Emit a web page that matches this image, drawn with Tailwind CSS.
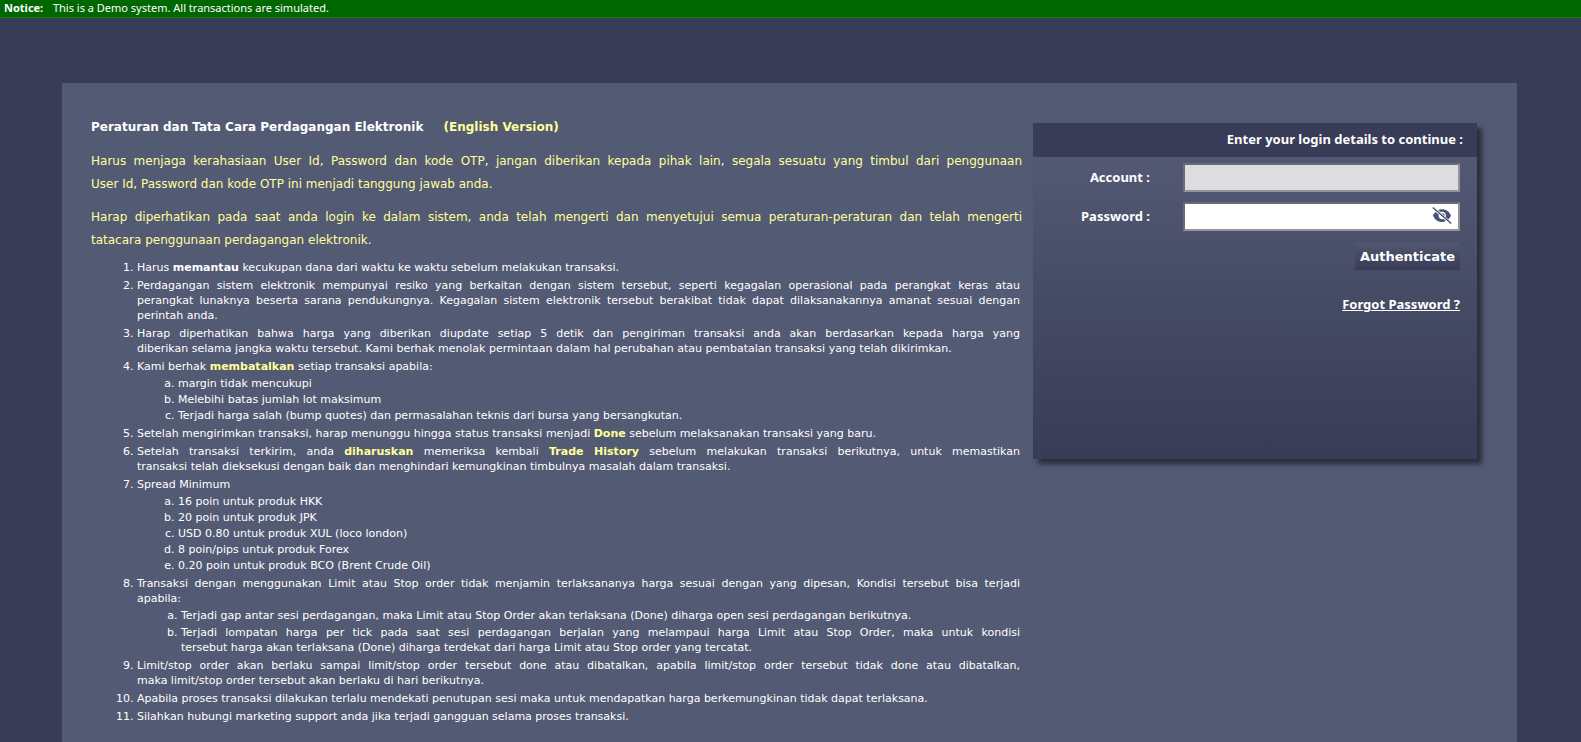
<!DOCTYPE html>
<html lang="id">
<head>
    <meta charset="UTF-8">
    <meta name="viewport" content="width=device-width, initial-scale=1.0">
    <title>Login</title>
    <script src="https://cdn.jsdelivr.net/npm/@tailwindcss/browser@4"></script>
</head>
<body class="bg-[#383c56] min-h-screen flex flex-col font-['DejaVu_Sans',sans-serif] text-white">
    <!-- Demo notice -->
    <div class="bg-[#006600] border-b border-[#148014] px-1 pb-px font-['Noto_Sans',sans-serif] text-[11px] leading-4">
        <b class="mr-1">Notice:</b>&nbsp; This is a Demo system. All transactions are simulated.
    </div>

    <main class="grow mt-[65px] ml-[62px] mr-16 bg-[#535a74] flex items-start pl-[29px] pr-10 pb-5">
        <!-- Rules -->
        <section class="flex-1 pt-[33px] text-justify">
            <h1 class="text-xs leading-[23px] font-bold">
                Peraturan dan Tata Cara Perdagangan Elektronik
                <a href="#" class="ml-4 text-[#ffff99]">(English Version)</a>
            </h1>
            <p class="mt-[11px] text-xs leading-[23px] text-[#ffff99]">
                Harus menjaga kerahasiaan User Id, Password dan kode OTP, jangan diberikan kepada pihak lain, segala sesuatu yang timbul dari penggunaan User&nbsp;Id,&nbsp;Password dan kode OTP ini menjadi tanggung jawab anda.
            </p>
            <p class="mt-[10px] text-xs leading-[23px] text-[#ffff99]">
                Harap diperhatikan pada saat anda login ke dalam sistem, anda telah mengerti dan menyetujui semua peraturan-peraturan dan telah mengerti tatacara&nbsp;penggunaan perdagangan elektronik.
            </p>

            <ol class="mt-2 pl-[46px] pr-[2px] list-decimal text-[11px] leading-[15px] space-y-[3px]">
                <li>Harus <b>memantau</b> kecukupan dana dari waktu ke waktu sebelum melakukan transaksi.</li>
                <li>Perdagangan sistem elektronik mempunyai resiko yang berkaitan dengan sistem tersebut, seperti kegagalan operasional pada perangkat keras atau perangkat&nbsp;lunaknya beserta sarana pendukungnya. Kegagalan sistem elektronik tersebut berakibat tidak dapat dilaksanakannya amanat sesuai dengan perintah&nbsp;anda.</li>
                <li>Harap diperhatikan bahwa harga yang diberikan diupdate setiap 5 detik dan pengiriman transaksi anda akan berdasarkan kepada harga yang diberikan&nbsp;selama&nbsp;jangka waktu tersebut. Kami berhak menolak permintaan dalam hal perubahan atau pembatalan transaksi yang telah dikirimkan.</li>
                <li>Kami berhak <b class="text-[#ffff99]">membatalkan</b> setiap transaksi apabila:
                    <ol class="mt-[2px] mb-[3px] pl-[41px] list-[lower-alpha] space-y-px">
                        <li>margin tidak mencukupi</li>
                        <li>Melebihi batas jumlah lot maksimum</li>
                        <li>Terjadi harga salah (bump quotes) dan permasalahan teknis dari bursa yang bersangkutan.</li>
                    </ol>
                </li>
                <li>Setelah mengirimkan transaksi, harap menunggu hingga status transaksi menjadi <b class="text-[#ffff99]">Done</b> sebelum melaksanakan transaksi yang baru.</li>
                <li>Setelah transaksi terkirim, anda <b class="text-[#ffff99]">diharuskan</b> memeriksa kembali <b class="text-[#ffff99]">Trade History</b> sebelum melakukan transaksi berikutnya, untuk memastikan transaksi&nbsp;telah&nbsp;dieksekusi dengan baik dan menghindari kemungkinan timbulnya masalah dalam transaksi.</li>
                <li>Spread Minimum
                    <ol class="mt-[2px] mb-[3px] pl-[41px] list-[lower-alpha] space-y-px">
                        <li>16 poin untuk produk HKK</li>
                        <li>20 poin untuk produk JPK</li>
                        <li>USD 0.80 untuk produk XUL (loco london)</li>
                        <li>8 poin/pips untuk produk Forex</li>
                        <li>0.20 poin untuk produk BCO (Brent Crude Oil)</li>
                    </ol>
                </li>
                <li><span class="block [text-align-last:justify]">Transaksi dengan menggunakan Limit atau Stop order tidak menjamin terlaksananya harga sesuai dengan yang dipesan, Kondisi tersebut bisa terjadi</span> apabila:
                    <ol class="mt-[2px] mb-[2px] pl-[44px] list-[lower-alpha] space-y-[2px]">
                        <li>Terjadi gap antar sesi perdagangan, maka Limit atau Stop Order akan terlaksana (Done) diharga open sesi perdagangan berikutnya.</li>
                        <li>Terjadi lompatan harga per tick pada saat sesi perdagangan berjalan yang melampaui harga Limit atau Stop Order, maka untuk kondisi tersebut&nbsp;harga&nbsp;akan terlaksana (Done) diharga terdekat dari harga Limit atau Stop order yang tercatat.</li>
                    </ol>
                </li>
                <li>Limit/stop order akan berlaku sampai limit/stop order tersebut done atau dibatalkan, apabila limit/stop order tersebut tidak done atau dibatalkan, <span class="whitespace-nowrap">maka limit/stop</span> order tersebut akan berlaku di hari berikutnya.</li>
                <li>Apabila proses transaksi dilakukan terlalu mendekati penutupan sesi maka untuk mendapatkan harga berkemungkinan tidak dapat terlaksana.</li>
                <li>Silahkan hubungi marketing support anda jika terjadi gangguan selama proses transaksi.</li>
            </ol>
        </section>

        <!-- Login box -->
        <form class="w-[444px] h-[336px] shrink-0 mt-10 ml-[11px] bg-linear-to-b from-[#565c77] to-[#383c56] shadow-[5px_5px_5px_rgba(0,0,0,0.5)] font-['Noto_Sans',sans-serif] text-[13px] font-bold">
            <h2 class="bg-[#383c56] pr-[14px] pb-[2px] text-right leading-8">Enter your login details to continue :</h2>
            <div class="grid grid-cols-[117px_1fr] gap-x-[33px] gap-y-[10px] items-center pt-[6px] pr-[17px]">
                <label for="account" class="text-right">Account :</label>
                <input type="text" id="account" class="w-full h-[29px] border-2 border-t-[#6b6b78] border-l-[#6b6b78] border-r-[#93939f] border-b-[#93939f] bg-[#dddde0] px-1 text-black">
                <label for="password" class="text-right">Password :</label>
                <div class="relative">
                    <input type="password" id="password" class="block w-full h-[29px] border-2 border-t-[#6b6b78] border-l-[#6b6b78] border-r-[#93939f] border-b-[#93939f] bg-white pl-1 pr-8 text-black">
                    <button type="button" aria-label="Tampilkan password" class="absolute right-2 top-1 size-5">
                        <svg class="size-5" viewBox="0 0 20 20" fill="none" stroke="#4b5270">
                            <path d="M3.2 6C1.6 8 1 9.500 1 9.500C2.700 13.800 6 16 9.800 16C11.300 16 12.600 15.700 13.800 15.100L11.600 13C8.500 14 6 11.500 6.700 8.500Z" fill="#4b5270" stroke="none"/>
                            <path d="M6 4C7.200 3.500 8.500 3.200 10 3.200C14 3.200 17.500 5.500 19 9.600C18.400 11.300 17.500 12.500 16.300 13.500L13.600 11C14.800 7.500 12 4.800 8.500 6.100Z" fill="#4b5270" stroke="none"/>
                            <path d="M9.800 7.200C11.800 7 12.900 8.400 12.600 10.200Z" fill="#4b5270" stroke="none"/>
                            <path d="M0.800 1.500L19.200 17.500" stroke-width="1.500"/>
                        </svg>
                    </button>
                </div>
            </div>
            <div class="flex flex-col items-end pr-[17px]">
                <button type="submit" class="mt-3 h-[27px] px-[5px] bg-linear-to-b from-[#525872] to-[#383c56] font-['DejaVu_Sans',sans-serif] text-[13px] font-bold">Authenticate</button>
                <a href="#" class="mt-6 leading-5 underline">Forgot Password ?</a>
            </div>
        </form>
    </main>
</body>
</html>
